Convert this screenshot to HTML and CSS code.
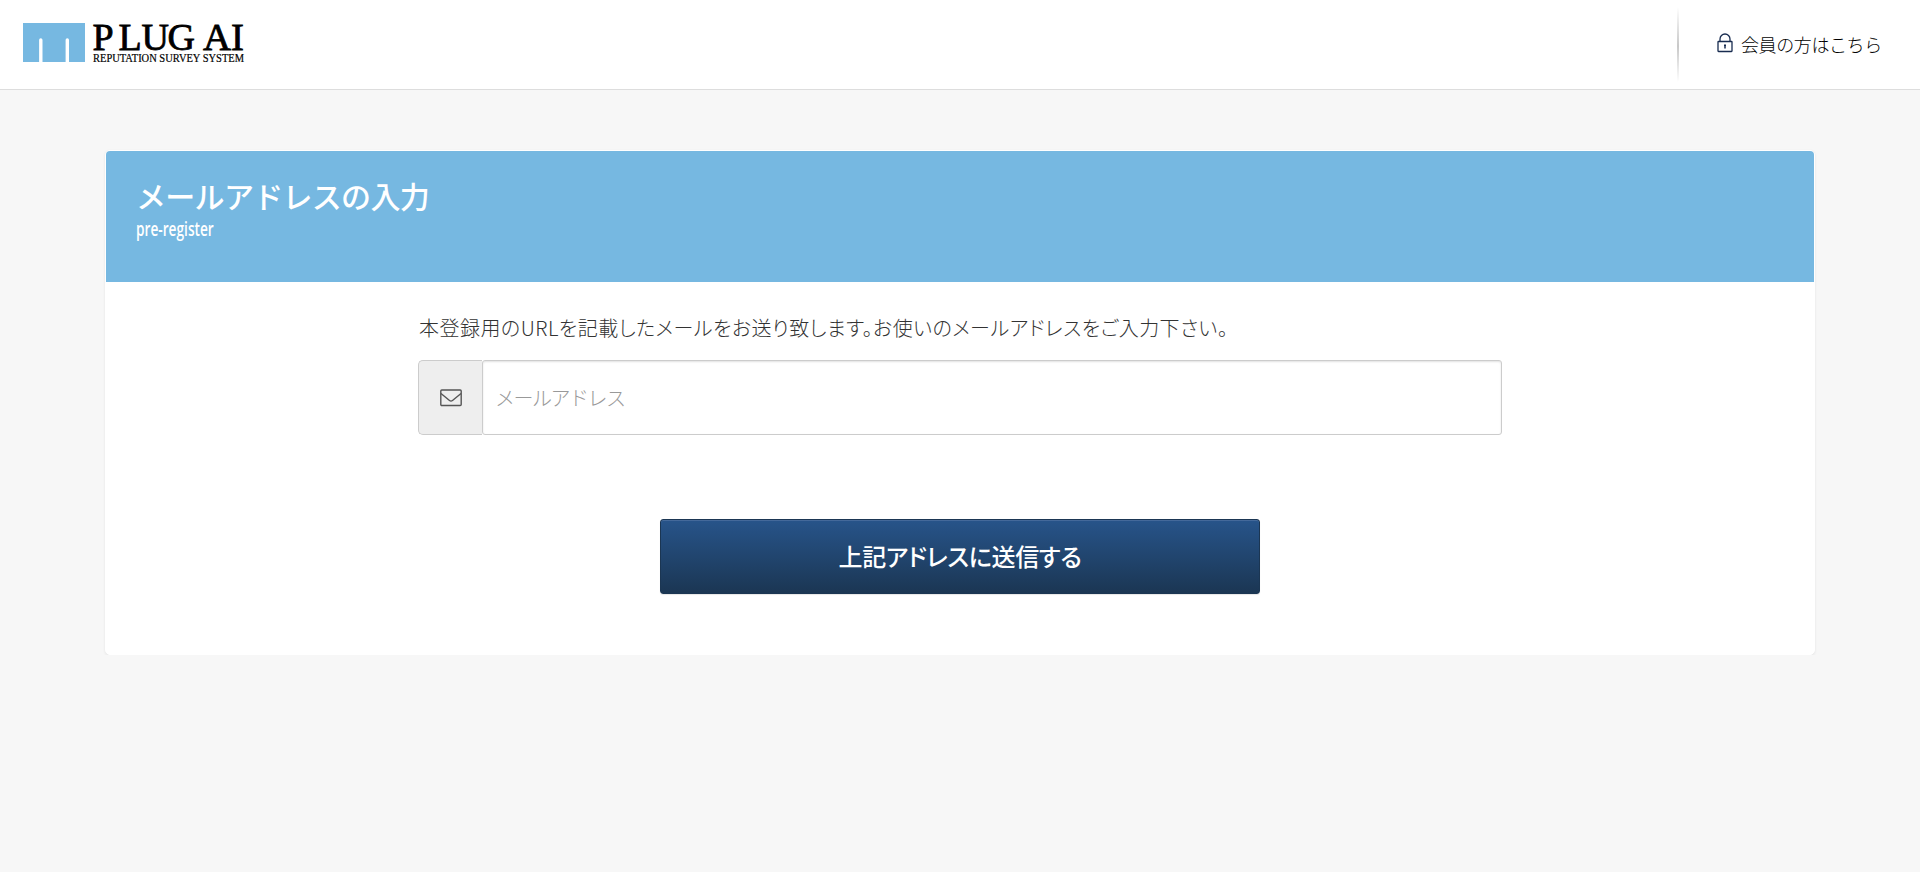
FILE: index.html
```html
<!DOCTYPE html>
<html lang="ja">
  <head>
    <meta charset="utf-8" />
    <meta name="viewport" content="width=device-width, initial-scale=1" />
    <title>PLUG AI</title>
    <link rel="stylesheet" href="styles.css">
  </head>
  <body>
    <header class="header">
      <a class="logo" href="#">
        <svg width="230" height="65" viewBox="0 -15 230 65">
          <path fill="#76b8e1" d="M0 0h62v39H46V17a1.7 1.7 0 0 0-3.4 0v22H19.500V17a1.700 1.700 0 0 0-3.400 0v22H0z" />
          <text class="logo-name" x="69.500 95.500 118.500 144.500" y="26.500">PLUG</text>
          <text class="logo-name" x="180" y="26.500" textLength="41" lengthAdjust="spacingAndGlyphs">AI</text>
          <text class="logo-sub" x="70" y="38.800" textLength="151" lengthAdjust="spacingAndGlyphs">REPUTATION SURVEY SYSTEM</text>
        </svg>
      </a>
      <div class="member">
        <a class="member-link" href="#">
          <svg width="16" height="20" viewBox="0 0 16 20" fill="none" stroke="#182c50" stroke-width="1.300">
            <path d="M3 8.500V6a5 5 0 0 1 10 0v2.500" />
            <rect x="1" y="8.500" width="14" height="10" rx=".5" />
            <path d="M8 11.500v4M7 12.300h2" stroke-width="1.500" />
          </svg>
          <span>会員の方はこちら</span>
        </a>
      </div>
    </header>
    <main class="card">
      <div class="card-header">
        <h1>メールアドレスの入力</h1>
        <p>pre-register</p>
      </div>
      <form class="card-body">
        <label class="lead" for="email">本登録用のURLを記載したメールをお送り致します。お使いのメールアドレスをご入力下さい。</label>
        <div class="input-group">
          <span class="addon">
            <svg width="22" height="18" viewBox="0 0 22 18" fill="none" stroke="#555" stroke-width="1.400">
              <rect x=".8" y="1" width="20.400" height="15.500" rx="1" />
              <path d="M1 4.500L9.500 11.500q1.500 1.200 3 0L21 4.500" />
            </svg>
          </span>
          <input id="email" type="email" name="email" placeholder="メールアドレス" />
        </div>
        <button class="submit" type="submit">上記アドレスに送信する</button>
      </form>
    </main>
  </body>
</html>
```
FILE: styles.css
```css
* {
  box-sizing: border-box;
}
body {
  margin: 0;
  background: #f7f7f7;
  color: #333;
  font-family: "Noto Sans CJK JP", "Liberation Sans", sans-serif;
}
.header {
  display: flex;
  justify-content: space-between;
  height: 90px;
  background: #fff;
  border-bottom: 1px solid #ddd;
}
.logo {
  padding: 8px 0 0 23px;
}
.logo svg {
  display: block;
}
.logo-name {
  font-family: "Liberation Serif", serif;
  font-size: 38px;
  fill: #000;
  stroke: #000;
  stroke-width: 0.8px;
}
.logo-sub {
  font-family: "Liberation Serif", serif;
  font-size: 11.5px;
  fill: #000;
  stroke: #000;
  stroke-width: 0.2px;
}
.member {
  display: flex;
  width: 243px;
  background: linear-gradient(#fff 8%, #c8c8c8 52%, #fff 92%) left / 2px 89px no-repeat;
}
.member-link {
  display: flex;
  align-items: center;
  gap: 8px;
  padding: 0 0 4px 40px;
  color: #000;
  font-size: 18px;
  font-weight: 300;
  letter-spacing: -0.4px;
  text-decoration: none;
  white-space: nowrap;
}
.member-link span {
  padding-top: 3px;
}
.card {
  width: 1710px;
  height: 505px;
  margin: 60px auto 0;
  border: 1px solid #fff;
  border-radius: 5px;
  background: #fff;
  box-shadow: 0 1px 3px rgba(0, 0, 0, 0.08);
}
.card-header {
  height: 131px;
  padding: 22px 30px;
  border-radius: 4px 4px 0 0;
  background: #76b8e1;
  color: #fff;
}
.card-header h1 {
  margin: 0;
  font-size: 30px;
  font-weight: 500;
  line-height: 44px;
  letter-spacing: -0.7px;
}
.card-header p {
  display: inline-block;
  margin: 0;
  font-family: "Open Sans", sans-serif;
  font-size: 19px;
  font-weight: 600;
  line-height: 24px;
  transform: scaleX(0.72);
  transform-origin: left;
}
.card-body {
  display: flex;
  flex-direction: column;
  width: 1084px;
  margin: 0 auto;
  padding-top: 29px;
}
.lead {
  height: 49px;
  padding-left: 1px;
  font-size: 20px;
  font-weight: 300;
  line-height: 34px;
  letter-spacing: 0.48px;
  font-feature-settings: "palt";
  white-space: nowrap;
}
.input-group {
  display: flex;
  height: 75px;
}
.addon {
  display: flex;
  align-items: center;
  justify-content: center;
  width: 64px;
  border: 1px solid #ccc;
  border-right: 0;
  border-radius: 5px 0 0 5px;
  background: #eee;
}
.input-group input {
  flex: 1;
  padding: 0 12px;
  border: 1px solid #ccc;
  border-radius: 3px;
  box-shadow: inset 0 1px 2px rgba(0, 0, 0, 0.12);
  font: inherit;
  font-size: 20px;
  font-weight: 300;
}
.input-group input::placeholder {
  color: #999;
  letter-spacing: -1.5px;
}
.submit {
  align-self: center;
  width: 600px;
  height: 75px;
  margin-top: 84px;
  padding-bottom: 3px;
  border: 1px solid #1b3653;
  border-radius: 3px;
  background: linear-gradient(#27548a, #1b3653);
  box-shadow: inset 0 1px 0 #44699a, 0 1px 1px rgba(0, 0, 0, 0.1);
  color: #fff;
  font: inherit;
  font-size: 24px;
  font-weight: 500;
  letter-spacing: -0.3px;
  font-feature-settings: "palt";
}
```
